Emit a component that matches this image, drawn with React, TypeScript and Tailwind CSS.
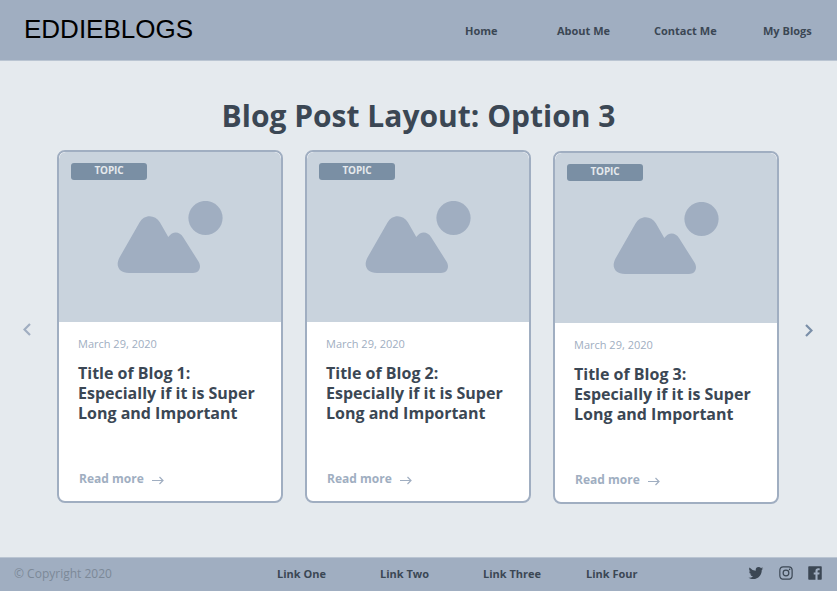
import React from "react";
import { BiLogoTwitter, BiLogoInstagram, BiLogoFacebookSquare } from "react-icons/bi";

function Placeholder() {
  return (
    <svg width="106" height="73" viewBox="0 0 106 73" className="fill-[#a0aec1]">
      <circle cx="88.5" cy="17" r="17.1" />
      <path d="M22.5 21.5C27 13 38 13 43 21.5L51.3 36C56 29.500 62.500 30.500 66 36L81.500 60.500C85 66.500 82 72 76 72H12C2 72 -2 65 2.500 56.500Z" />
    </svg>
  );
}

function Card({ n, className }: { n: number; className: string }) {
  return (
    <article className={`flex h-[353px] w-[226px] shrink-0 flex-col overflow-hidden rounded-lg border-2 border-[#a0aec1] bg-white ${className}`}>
      <div className="h-[170px] shrink-0 rounded-t-[7px] bg-[#c9d3dd] pt-[11px]">
        <div className="ml-3 h-[17px] w-[76px] rounded-[3px] bg-[#7a8fa4] text-center text-[10px] leading-[15px] font-bold tracking-[-0.1px] text-[#e5e9ed]">
          TOPIC
        </div>
        <div className="mt-[21px] ml-[58px]">
          <Placeholder />
        </div>
      </div>
      <div className="flex grow flex-col pl-[19px]">
        <p className="mt-[14px] text-[11px] leading-4 text-[#a0aec1]">March 29, 2020</p>
        <h2 className="mt-[11px] text-[16px] leading-5 font-bold whitespace-nowrap text-[#3b4754]">
          Title of Blog {n}:<br />
          Especially if it is Super<br />
          Long and Important
        </h2>
        <a className="mt-[48px] ml-px flex items-center text-[12px] leading-4 font-bold text-[#a0aec1]">
          Read more
          <svg width="12" height="9" viewBox="0 0 12 9" className="mt-[3px] ml-2 fill-none stroke-[#a0aec1] stroke-[1.2]">
            <path d="M0 4.500H11M7.500 1L11 4.500L7.500 8" />
          </svg>
        </a>
      </div>
    </article>
  );
}

export default function App() {
  return (
    <div className="flex h-[591px] w-[837px] flex-col overflow-hidden bg-[#e5eaee] font-['Open_Sans',sans-serif] text-[#3b4754]">
      <header className="flex h-[61px] shrink-0 items-center border-b border-[#bac5d2] bg-[#a0aec1] pl-6">
        <div className="w-[441px] pb-[2px] font-['Liberation_Sans',sans-serif] text-[26px] leading-8 text-black">EDDIEBLOGS</div>
        <nav className="flex pt-[2px] text-[11px] leading-4 font-bold whitespace-nowrap">
          <a className="w-[92px]">Home</a>
          <a className="w-[97px]">About Me</a>
          <a className="w-[109px]">Contact Me</a>
          <a>My Blogs</a>
        </nav>
      </header>
      <main className="flex grow flex-col">
        <h1 className="mt-[35px] text-center text-[30px] leading-10 font-bold">Blog Post Layout: Option 3</h1>
        <div className="mt-[14px] flex">
          <svg width="8" height="13" viewBox="0 0 8 13" className="mt-[173px] ml-[23px] shrink-0 fill-none stroke-[#a0aec1] stroke-[2.2]">
            <path d="M7 1L1.500 6.500L7 12" />
          </svg>
          <Card n={1} className="ml-[26px]" />
          <Card n={2} className="ml-[22px]" />
          <Card n={3} className="mt-px ml-[22px]" />
          <svg width="8" height="13" viewBox="0 0 8 13" className="mt-[174px] ml-[26px] shrink-0 fill-none stroke-[#7a8fa8] stroke-[2.2]">
            <path d="M1 1L6.500 6.500L1 12" />
          </svg>
        </div>
      </main>
      <footer className="flex h-[34px] shrink-0 items-center border-t border-[#bac5d2] bg-[#a0aec1] pb-[2px] pl-[14px]">
        <p className="w-[263px] text-[12px] leading-4 text-[#7c8998]">© Copyright 2020</p>
        <nav className="flex w-[470px] text-[11px] leading-4 font-bold whitespace-nowrap">
          <a className="w-[103px]">Link One</a>
          <a className="w-[103px]">Link Two</a>
          <a className="w-[103px]">Link Three</a>
          <a>Link Four</a>
        </nav>
        <div className="flex gap-[11.5px] pb-[2px] text-[18px]">
          <BiLogoTwitter />
          <BiLogoInstagram />
          <BiLogoFacebookSquare />
        </div>
      </footer>
    </div>
  );
}
